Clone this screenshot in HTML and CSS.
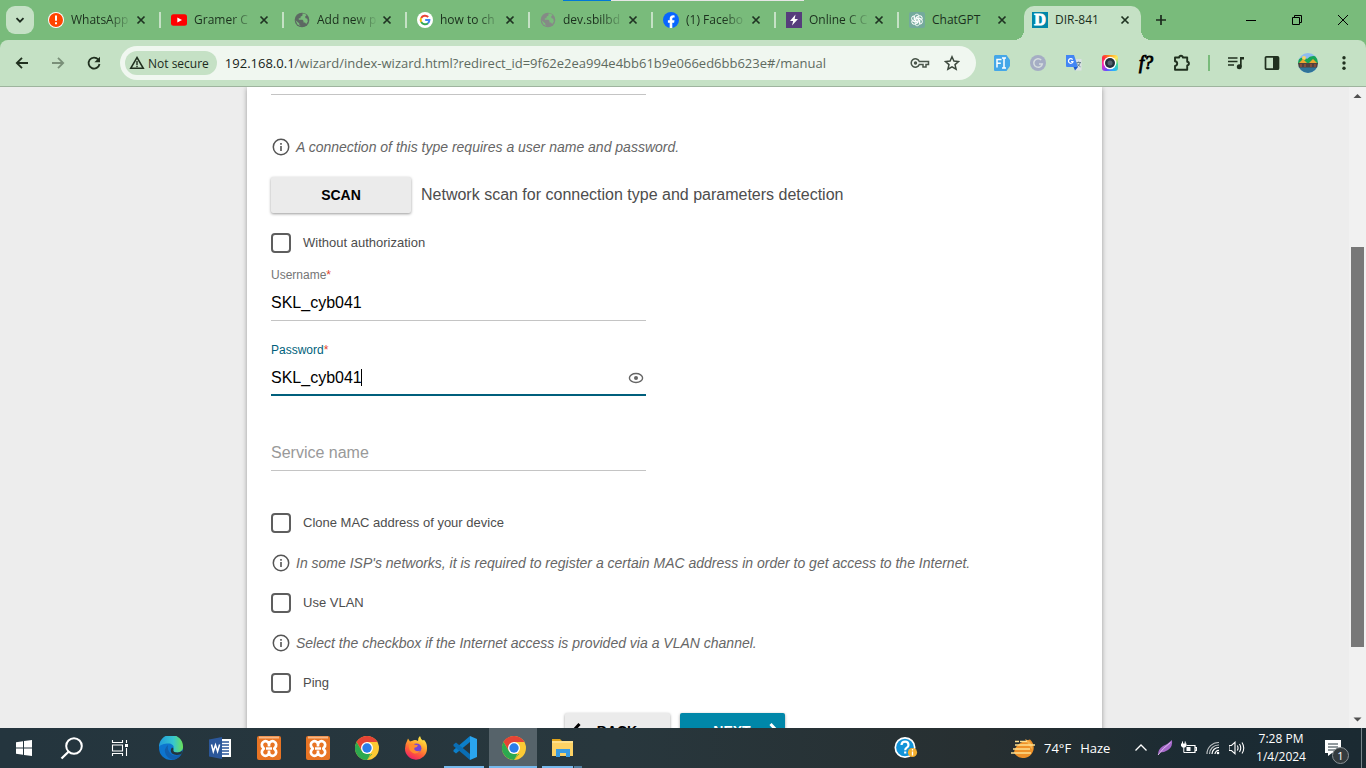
FILE: index.html
```html
<!DOCTYPE html>
<html lang="en">
<head>
<meta charset="utf-8">
<title>DIR-841</title>
<link rel="stylesheet" href="styles.css">
</head>
<body>
<svg class="defs" aria-hidden="true">
  <symbol id="x" viewBox="0 0 16 16"><path d="M4.500 4.500l7 7m0-7l-7 7" stroke="#1f3322" stroke-width="1.700" fill="none"/></symbol>
  <symbol id="globe" viewBox="0 0 16 16"><circle cx="8" cy="8" r="7.300" fill="currentColor"/><path d="M8.500 1.500v2l-2 1.300v1.500H4.800v1.500H8.500l1 1.200v1.500H11l1.200 1.400 1.600-2.400-.5-2.700-1.600-.6-.7-1.500 1.500-1.400-1.500-1.500zM1.500 8.300l3.800 3.200v1.200l1.500 1.600-3.300-1.800z" fill="#79bb7b"/></symbol>
  <symbol id="info" viewBox="0 0 20 20"><circle cx="10" cy="10" r="7.700" fill="none" stroke="#555" stroke-width="1.500"/><path d="M10 9v5M10 6v1.700" stroke="#555" stroke-width="1.600"/></symbol>
  <symbol id="chrome" viewBox="0 0 24 24"><circle cx="12" cy="12" r="12" fill="#fcc934"/><path d="M12 12L6.800 15 1.600 6A12 12 0 0 1 22.400 6H12z" fill="#e54335"/><path d="M1.600 6L6.800 15 12 18h5.200L12 24A12 12 0 0 1 1.600 6z" fill="#2da94f"/><path d="M12 24l5.200-9 .2-5H22.400L12 24z" fill="#fcc934"/><circle cx="12" cy="12" r="6" fill="#fff"/><circle cx="12" cy="12" r="4.700" fill="#2b7de9"/></symbol>
  <symbol id="xampp" viewBox="0 0 24 24"><rect width="24" height="24" rx="2" fill="#e87424"/><path d="M2 1.500h20" stroke="#f6b785" stroke-width="2"/><path d="M12 10.500V8.500A3.600 3.600 0 1 0 6 11.500Q7.500 12.500 6 13.500A3.600 3.600 0 1 0 12 16.500V14.500M12 8.500A3.600 3.600 0 1 1 18 11.500Q16.500 12.500 18 13.500A3.600 3.600 0 1 1 12 16.500M9 12.500h6" fill="none" stroke="#fff" stroke-width="2.700" stroke-linejoin="round"/></symbol>
</svg>

<header class="tabstrip">
  <button class="tab-search" aria-label="Search tabs"><svg width="16" height="16" viewBox="0 0 16 16"><path d="M4.500 6.200L8 9.700l3.500-3.500" fill="none" stroke="#1c2b1e" stroke-width="1.800"/></svg></button>
  <nav class="tabs">
    <div class="tab"><svg class="fav" viewBox="0 0 16 16"><circle cx="8" cy="8" r="8" fill="#fff"/><circle cx="8" cy="8" r="7" fill="#ff4500"/><path d="M8 3.500v5.300M8 10.300v2" stroke="#fff" stroke-width="2"/></svg><a class="fade" href="#">WhatsApp</a><button aria-label="Close tab"><svg><use href="#x"/></svg></button></div>
    <div class="tab"><svg class="fav" viewBox="0 0 16 16"><rect y="2.300" width="16" height="11.400" rx="2.500" fill="#f00"/><path d="M6.300 5.500v5L11 8z" fill="#fff"/></svg><a class="fade" href="#">Gramer C</a><button aria-label="Close tab"><svg><use href="#x"/></svg></button></div>
    <div class="tab"><svg class="fav dark"><use href="#globe"/></svg><a class="fade" href="#">Add new p</a><button aria-label="Close tab"><svg><use href="#x"/></svg></button></div>
    <div class="tab"><svg class="fav" viewBox="0 0 16 16"><circle cx="8" cy="8" r="8" fill="#fff"/><g fill="none" stroke-width="2"><path d="M4.200 5.900A4.400 4.400 0 0 1 11.200 5" stroke="#ea4335"/><path d="M4.200 5.900a4.400 4.400 0 0 0 0 4.200" stroke="#fbbc05"/><path d="M4.200 10.100A4.400 4.400 0 0 0 11 11.200" stroke="#34a853"/><path d="M11 11.200A4.400 4.400 0 0 0 12.400 8H8.200" stroke="#4285f4"/></g></svg><a class="fade" href="#">how to ch</a><button aria-label="Close tab"><svg><use href="#x"/></svg></button></div>
    <div class="tab"><svg class="fav grey"><use href="#globe"/></svg><a class="fade" href="#">dev.sbilbd</a><button aria-label="Close tab"><svg><use href="#x"/></svg></button></div>
    <div class="tab"><svg class="fav" viewBox="0 0 16 16"><circle cx="8" cy="8" r="8" fill="#0866ff"/><path d="M6.700 16v-5.200H4.900V8.200h1.800V7c0-2.600 1.200-3.800 3.700-3.800l1.200.2v2.200h-.9c-1.100 0-1.400.5-1.400 1.500v1.100h2.200l-.4 2.600H9.300V16z" fill="#fff"/></svg><a class="fade" href="#">(1) Facebo</a><button aria-label="Close tab"><svg><use href="#x"/></svg></button></div>
    <div class="tab"><svg class="fav" viewBox="0 0 16 16"><rect width="16" height="16" fill="#563d7c"/><path d="M9.500 2.500L4 9h3.200L6 13.500 12 7H8.700z" fill="#fff"/></svg><a class="fade" href="#">Online C C</a><button aria-label="Close tab"><svg><use href="#x"/></svg></button></div>
    <div class="tab"><svg class="fav" viewBox="0 0 16 16"><rect width="16" height="16" rx="2" fill="#74aa9c"/><g fill="none" stroke="#fff" stroke-width=".9"><path id="pet" d="M8 6L5.500 7.400V4.500C5.500 2 9 1.500 10 3.500L7 5.200V8"/><use href="#pet" transform="rotate(60 8 8)"/><use href="#pet" transform="rotate(120 8 8)"/><use href="#pet" transform="rotate(180 8 8)"/><use href="#pet" transform="rotate(240 8 8)"/><use href="#pet" transform="rotate(300 8 8)"/></g></svg><a href="#">ChatGPT</a><button aria-label="Close tab"><svg><use href="#x"/></svg></button></div>
    <div class="tab active"><span class="fav dlink">D</span><a href="#">DIR-841</a><button aria-label="Close tab"><svg><use href="#x"/></svg></button></div>
  </nav>
  <button class="new-tab" aria-label="New tab"><svg width="16" height="16" viewBox="0 0 16 16"><path d="M8 3v10M3 8h10" stroke="#1c2b1e" stroke-width="1.700"/></svg></button>
  <div class="window-buttons">
    <button aria-label="Minimize"><svg viewBox="0 0 12 12"><path d="M1 6.500h10" /></svg></button>
    <button aria-label="Restore"><svg viewBox="0 0 12 12"><path d="M1.500 3.500h7v7h-7zM3.500 3.500v-2h7v7h-2"/></svg></button>
    <button aria-label="Close"><svg viewBox="0 0 12 12"><path d="M1 1l10 10M11 1L1 11"/></svg></button>
  </div>
  <div class="load-strip"></div>
</header>

<div class="toolbar">
  <button aria-label="Back"><svg viewBox="0 0 16 16"><path d="M14 8H3M8 2.800L2.800 8 8 13.200" class="line"/></svg></button>
  <button aria-label="Forward" class="dim"><svg viewBox="0 0 16 16"><path d="M2 8h11M8 2.800L13.200 8 8 13.200" class="line"/></svg></button>
  <button aria-label="Reload"><svg viewBox="0 0 16 16"><path d="M12.300 4.500A5.500 5.500 0 1 0 13.500 9" class="line"/><path d="M14 1.700v5.600H8.400z" fill="#20301f"/></svg></button>
  <div class="omnibox">
    <button class="chip"><svg viewBox="0 0 16 16"><path d="M8 2.500L14.300 13.300H1.700z" fill="none" stroke="#20301f" stroke-width="1.500"/><path d="M8 6v4M8 10.800v1.400" stroke="#20301f" stroke-width="1.400"/></svg>Not secure</button>
    <a class="url" href="#/manual"><span>192.168.0.1</span>/wizard/index-wizard.html?redirect_id=9f62e2ea994e4bb61b9e066ed6bb623e#/manual</a>
    <button aria-label="Passwords"><svg viewBox="0 0 20 16" class="key"><path d="M9.300 6.500A4.200 4.200 0 1 0 9.300 9.500H13v2.500h3V9.500h2.500v-3z" fill="none" stroke="#4a564b" stroke-width="1.500"/><circle cx="5.500" cy="8" r="1.700" fill="#4a564b"/></svg></button>
    <button aria-label="Bookmark this tab"><svg viewBox="0 0 16 16"><path d="M8 1.800l1.900 4.300 4.600.4-3.500 3.100 1.100 4.600L8 11.800l-4.100 2.400L5 9.600 1.500 6.500l4.600-.4z" fill="none" stroke="#3c483d" stroke-width="1.500"/></svg></button>
  </div>
  <button aria-label="Font extension"><svg viewBox="0 0 16 16"><path d="M1 0h11.500L16 5v6l-3.500 5H1a1 1 0 0 1-1-1V1z" fill="#45a7e8"/><path d="M3 12.500v-8h4.500M3 8.300h3.800M8 3h4M10 3v10M8 13h4" fill="none" stroke="#fff" stroke-width="1.500"/></svg></button>
  <button aria-label="Grammarly"><svg viewBox="0 0 16 16"><circle cx="8" cy="8" r="8" fill="#a5adc4"/><path d="M11.200 5A4.300 4.300 0 1 0 12.300 9H9" fill="none" stroke="#d5ddde" stroke-width="1.500"/></svg></button>
  <button aria-label="Translate"><svg viewBox="0 0 16 16"><path d="M7 4h8.500v11.500H9z" fill="#dce2e5"/><path d="M0 0h8l4 12H1a1 1 0 0 1-1-1z" fill="#4285f4"/><path d="M7.500 12H12l-3 3.500z" fill="#1b57c8"/><path d="M6.600 4.600A2.300 2.300 0 1 0 7 6.500H5" fill="none" stroke="#fff" stroke-width="1.200"/><path d="M10.500 7.500H15M12.700 6.500v1M14.300 7.500q-.6 2.500-3 4M11.300 8.500q1 2 3.200 3.300" fill="none" stroke="#607d8b" stroke-width=".9"/></svg></button>
  <button aria-label="Screen capture"><span class="capture"><svg viewBox="0 0 16 16"><circle cx="8" cy="8" r="6.300" fill="#fff"/><circle cx="8" cy="8" r="5" fill="#26303b"/><circle cx="8" cy="8" r="2.500" fill="#56636e"/></svg></span></button>
  <button aria-label="What font" class="whatfont">f?</button>
  <button aria-label="Extensions"><svg class="big" viewBox="0 0 18 18"><path d="M2 3.500h4.200q.1-1.700 1.800-1.700t1.800 1.700h4.400v4.300q1.700.1 1.700 1.800t-1.700 1.800v4.300H2v-3.800q2.200-.3 2.200-2.300T2 7.300z" fill="none" stroke="#20301f" stroke-width="1.900" stroke-linejoin="round"/></svg></button>
  <i class="divider"></i>
  <button aria-label="Media"><svg viewBox="0 0 16 16"><path d="M0 3h9.500M0 6.500h9.500M0 10h6" stroke="#20301f" stroke-width="1.700"/><path d="M12 11.500V2h4v2.500h-2.300v7.200" fill="#20301f"/><circle cx="11.300" cy="11.700" r="2.500" fill="#20301f"/></svg></button>
  <button aria-label="Side panel"><svg viewBox="0 0 16 16"><rect x="1.500" y="1.800" width="13" height="12.400" rx="1" fill="none" stroke="#20301f" stroke-width="1.700"/><path d="M9 2h5.500v12H9z" fill="#20301f"/></svg></button>
  <button aria-label="Profile"><svg class="avatar" viewBox="0 0 20 20"><clipPath id="av"><circle cx="10" cy="10" r="10"/></clipPath><g clip-path="url(#av)"><path fill="#8fbcf0" d="M0 0h20v20H0z"/><path d="M0 7q5-5 9-1 4-5 11-2v7H0z" fill="#16a556"/><circle cx="6" cy="5" r="2" fill="#f8d46c"/><path d="M0 10h20v5H0z" fill="#51423d"/><path d="M1 10l4-4 4 4zM11 10l4-4 4 4z" fill="#eda52f"/><path d="M3 11v3M7 11v3M13 11v3M17 11v3" stroke="#b6563c"/><path d="M0 14.500h20V20H0z" fill="#2f7398"/></g></svg></button>
  <button aria-label="Menu"><svg viewBox="0 0 16 16" fill="#20301f"><circle cx="8" cy="2.700" r="1.700"/><circle cx="8" cy="8" r="1.700"/><circle cx="8" cy="13.300" r="1.700"/></svg></button>
</div>

<div class="viewport">
  <main class="page">
    <form class="card">
      <div class="field-end"></div>
      <p class="hint"><svg><use href="#info"/></svg>A connection of this type requires a user name and password.</p>
      <div class="scan-row"><button type="button" class="btn scan">SCAN</button><span>Network scan for connection type and parameters detection</span></div>
      <label class="check"><input type="checkbox"><span>Without authorization</span></label>
      <div class="field"><label for="user">Username<b>*</b></label><input id="user" value="SKL_cyb041"></div>
      <div class="field focused"><label for="pass">Password<b>*</b></label><input id="pass" value="SKL_cyb041"><i class="caret"></i><button type="button" class="eye" aria-label="Show password"><svg viewBox="0 0 16 12"><ellipse cx="8" cy="6" rx="6.600" ry="4.500" fill="none" stroke="#666" stroke-width="1.400"/><circle cx="8" cy="6" r="2" fill="#666"/></svg></button></div>
      <div class="field last"><label for="service"></label><input id="service" placeholder="Service name" aria-label="Service name"></div>
      <label class="check"><input type="checkbox"><span>Clone MAC address of your device</span></label>
      <p class="hint"><svg><use href="#info"/></svg>In some ISP's networks, it is required to register a certain MAC address in order to get access to the Internet.</p>
      <label class="check"><input type="checkbox"><span>Use VLAN</span></label>
      <p class="hint"><svg><use href="#info"/></svg>Select the checkbox if the Internet access is provided via a VLAN channel.</p>
      <label class="check"><input type="checkbox"><span>Ping</span></label>
      <div class="steps">
        <button type="button" class="btn"><svg viewBox="0 0 10 16"><path d="M8.500 1L2 8l6.500 7"/></svg>BACK<i></i></button>
        <button type="button" class="btn next"><i></i>NEXT<svg viewBox="0 0 10 16"><path d="M1.500 1L8 8l-6.500 7"/></svg></button>
      </div>
    </form>
  </main>
  <div class="scrollbar"><svg viewBox="0 0 17 17"><path d="M4.500 11L8.500 7l4 4z"/></svg><div class="track"><div class="thumb"></div></div><svg viewBox="0 0 17 17"><path d="M4.500 6.500l4 4 4-4z"/></svg></div>
</div>

<footer class="taskbar">
  <button class="sys" aria-label="Start"><svg width="16" height="16" viewBox="0 0 16 16"><path d="M0 2.300L7 1.300v6.300H0zM8 1.100L16 0v7.600H8zM0 8.600h7v6.200l-7-1zM8 8.600h8V16l-8-1.100z" fill="#fff"/></svg></button>
  <button class="sys" aria-label="Search"><svg width="24" height="24" viewBox="0 0 24 24"><circle cx="14" cy="10" r="7.800" fill="none" stroke="#fff" stroke-width="2"/><path d="M8.500 15.700L1.500 22.500" stroke="#fff" stroke-width="2.300"/></svg></button>
  <button class="sys" aria-label="Task view"><svg width="18" height="16" viewBox="0 0 18 16"><path d="M1.500 0v2.500h10V0M1.500 5h10v6h-10zM1.500 16v-2.500h10V16M15.500 0v3M15.500 8v8" fill="none" stroke="#fff" stroke-width="1.100"/><path d="M14 4h3v3h-3z" fill="#fff"/></svg></button>
  <div class="apps">
    <button aria-label="Edge"><svg viewBox="0 0 24 24"><defs><linearGradient id="e1"><stop stop-color="#209bdc"/><stop offset=".6" stop-color="#37c6ce"/><stop offset="1" stop-color="#6be156"/></linearGradient></defs><circle cx="12" cy="12" r="12" fill="#0d75cf"/><path d="M0 11A12 12 0 0 1 24 10.500c.3 4-3 6-6.500 6-3.500 0-5-1.500-3.500-3 2-3-.5-6-4.500-6C5 7.500 1 9 0 11z" fill="url(#e1)"/><path d="M9 9q-5 4-2 10 3 4.500 8 4.700A12 12 0 0 0 22.500 18q-6 3-10.500 0-4-3.500-3-9z" fill="#115fae"/><path d="M14.500 13q-1 3.500 4 3.500 3 0 5-2l-1 3.500q-6 2-9.500-.5-2.500-3 0-6 1.500 0 1.500 1.500z" fill="#24353d"/></svg></button>
    <button aria-label="Word"><svg viewBox="0 0 24 24"><path d="M12 3h11v18H12z" fill="#fff"/><path d="M14 6h7M14 9h7M14 12h7M14 15h7M14 18h7" stroke="#2b579a" stroke-width="1.300"/><path d="M1 3.500L14 1v22L1 20.500z" fill="#2b579a"/><path d="M3.500 8.500L5.300 15.500 7.500 9l2.100 6.500 2-7" fill="none" stroke="#fff" stroke-width="1.500"/></svg></button>
    <button aria-label="XAMPP"><svg><use href="#xampp"/></svg></button>
    <button aria-label="XAMPP Control"><svg><use href="#xampp"/></svg></button>
    <button aria-label="Chrome"><svg><use href="#chrome"/></svg></button>
    <button aria-label="Firefox"><svg viewBox="0 0 24 24"><defs><linearGradient id="f1" x1=".8" y1="0" x2=".3" y2="1"><stop stop-color="#fff24d"/><stop offset=".35" stop-color="#ffb02e"/><stop offset=".7" stop-color="#ff5a39"/><stop offset="1" stop-color="#ed1f6b"/></linearGradient></defs><path d="M3 5l1-2.500 2 3 2.500-.7Q11 3 14 5q-.5-3 2-5 .5 3 3 4.500l1-.7q3.500 4 3 9A11 11 0 0 1 1 12.500Q1 8 3 5z" fill="url(#f1)"/><circle cx="12.500" cy="12.300" r="4.900" fill="#7545d5"/><path d="M5 8.500q4-1.500 6 .3l3 .4q-.5 2-3.500 2.500-1 2.300 2 3.300 2 .5 4-.5-3 4.500-7.500 2.500Q4 14.500 5 8.500z" fill="#ff8b2e"/></svg></button>
    <button class="open" aria-label="VS Code"><svg viewBox="0 0 24 24"><path d="M17 0l7 3v18l-7 3z" fill="#2aa5ef"/><path d="M17 0v6L3 17.500.5 15.500V14z" fill="#0c7fc9"/><path d="M17 24v-6L3 6.500.5 8.500V10z" fill="#0a6eb4"/></svg></button>
    <button class="open current" aria-label="Chrome window"><svg><use href="#chrome"/></svg></button>
    <button class="open stacked" aria-label="File Explorer"><svg viewBox="0 0 24 24"><path d="M1 3h8l2 2H1z" fill="#e0a31a"/><path d="M1 5h21v15H1z" fill="#fdd264"/><path d="M1 5h21v2H1z" fill="#ffe08a"/><path d="M5 21v-8h14v8h-4v-4H9v4z" fill="#3a9be0"/></svg></button>
  </div>
  <div class="tray">
    <button class="help" aria-label="Get help"><svg width="24" height="24" viewBox="0 0 24 24"><circle cx="11" cy="11.500" r="9.700" fill="#1293d8" stroke="#fff" stroke-width="1.700"/><path d="M7.500 9q.3-3.300 3.600-3.300T14.500 9q0 1.600-1.700 2.600-1.600.9-1.600 2.600M11.200 15.500v2" fill="none" stroke="#fff" stroke-width="2.200"/><circle cx="18.500" cy="16.500" r="4.600" fill="#f4af2f"/><path d="M18.500 15.500v4M18.500 13v1.500" stroke="#fff" stroke-width="1.300"/></svg></button>
    <button class="weather"><svg width="24" height="24" viewBox="0 0 24 24"><path d="M19 3.500A10.500 10.500 0 1 1 3 16.500q1-10 16-13z" fill="#ee9128"/><path d="M14 3q8 2.500 7.500 11-5-6-7.500-11z" fill="#f5b04b"/><path d="M4 5.500h4M9 5.500h7M4 9h20M2 13h17M0 17h20" stroke="#fee08e" stroke-width="1.700"/></svg><span>74°F</span><span>Haze</span></button>
    <button aria-label="Hidden icons"><svg viewBox="0 0 16 16"><path d="M2.500 10.500L8 5l5.500 5.500" fill="none" stroke="#fff" stroke-width="1.300"/></svg></button>
    <button aria-label="Pen"><svg viewBox="0 0 16 16"><path d="M1 15Q1 9 6 6q5-2 9-6 1 7-4 10-4 2.500-8 2.500z" fill="#a76acb"/><path d="M1 15Q6 8 13.500 2.500" stroke="#e0bfee" fill="none"/></svg></button>
    <button aria-label="Battery"><svg viewBox="0 0 16 16"><path d="M5.500 5.500H14v7H4.500M14.500 7.500h1v3h-1" fill="none" stroke="#fff" stroke-width="1.200"/><path d="M5.500 7h4v4h-4zM0 3.500h5.500V6L4 7.500H1.500L0 6zM1 1.500h1v2H1zM3.700 1.500h1v2h-1z" fill="#fff"/><path d="M2.800 7v5.500h2" fill="none" stroke="#fff"/></svg></button>
    <button aria-label="Network"><svg viewBox="0 0 16 16"><g fill="none" stroke="#fff" stroke-width="1.200"><path d="M10 14a3.500 3.500 0 0 1 4-3.500M7 14a6.500 6.500 0 0 1 7-6.500"/><path d="M4.500 14A9 9 0 0 1 14 5M2 14A11.500 11.500 0 0 1 14 2.500" opacity=".7"/></g><circle cx="13" cy="13" r="1.300" fill="#fff"/></svg></button>
    <button aria-label="Volume"><svg viewBox="0 0 16 16"><path d="M0 5.500h2.500L6 2.200v11.600L2.500 10.500H0zM8.300 5.500q1.500 2.500 0 5M10.500 4q2.500 4 0 8M13 2.500q3.500 5.500 0 11" fill="none" stroke="#fff" stroke-width="1.100"/></svg></button>
    <button class="clock"><span>7:28 PM</span><span>1/4/2024</span></button>
    <button class="notes" aria-label="1 notification"><svg width="18" height="16" viewBox="0 0 18 16"><path d="M1 0h16v13H8l-4 3v-3H1z" fill="#fff"/><path d="M4 4h10M4 7h10M4 10h7" stroke="#25353c"/></svg><b>1</b></button>
    <i class="desktop-edge"></i>
  </div>
</footer>
</body>
</html>
```
FILE: styles.css
```css
* { box-sizing: border-box; }
body {
  margin: 0;
  height: 100vh;
  display: flex;
  flex-direction: column;
  overflow: hidden;
  background: #79bb7b;
  font-family: "Open Sans", "Noto Sans", sans-serif;
  font-size: 12px;
}
button { border: 0; padding: 0; background: none; color: inherit; font: inherit; }
a { color: inherit; text-decoration: none; }
.defs { position: absolute; width: 0; height: 0; }

/* Tab strip */
.tabstrip { position: relative; flex: none; height: 40px; display: flex; align-items: center; padding-left: 6px; }
.tab-search { width: 28px; height: 28px; border-radius: 9px; background: #c5e1c5; display: grid; place-items: center; margin-right: 4px; flex: none; }
.tabs { display: flex; align-self: stretch; min-width: 0; }
.tab { position: relative; flex: 0 1 123px; width: 123px; min-width: 0; display: flex; align-items: center; padding: 0 12px 0 10px; color: #1b2f1d; }
.fav { width: 16px; height: 16px; flex: none; }
.fav.dark { color: #5c6862; }
.fav.grey { color: #858a86; }
.dlink { background: #0087a9; color: #fff; font: bold 16px/16px "Liberation Serif", serif; text-align: center; -webkit-text-stroke: 1px #fff; }
.tab a { flex: 1; min-width: 0; margin-left: 7px; overflow: hidden; white-space: nowrap; line-height: 18px; }
.tab .fade { -webkit-mask-image: linear-gradient(90deg, #000 60%, rgba(0, 0, 0, .1) 95%); mask-image: linear-gradient(90deg, #000 60%, rgba(0, 0, 0, .1) 95%); }
.tab button, .tab button svg { width: 16px; height: 16px; display: block; flex: none; }
.tab:not(.active)::after { content: ""; position: absolute; right: 0; top: 12px; width: 2px; height: 16px; background: #c5e1c5; }
.tab:nth-child(8)::after { display: none; }
.tab.active { isolation: isolate; }
.tab.active::before { content: ""; position: absolute; z-index: -1; inset: 6px 4px 0 2px; border-radius: 10px 10px 0 0; background: #c5e1c5; }
.tab.active::after {
  content: ""; position: absolute; z-index: -1; left: -8px; right: -6px; bottom: 0; height: 10px;
  background: radial-gradient(circle at 0 0, transparent 10px, #c5e1c5 10px) left / 10px 10px no-repeat, radial-gradient(circle at 100% 0, transparent 10px, #c5e1c5 10px) right / 10px 10px no-repeat;
}
.new-tab { display: grid; place-items: center; width: 32px; flex: none; }
.window-buttons { display: flex; margin-left: auto; align-self: stretch; }
.window-buttons button { width: 46px; display: grid; place-items: center; }
.window-buttons svg { width: 12px; height: 12px; fill: none; stroke: #000; }
.load-strip { position: absolute; top: 0; left: 563px; width: 241px; height: 1px; background: linear-gradient(90deg, #0078d7 20%, #e6e6e6 20%); }

/* Toolbar */
.toolbar { flex: none; height: 47px; display: flex; align-items: center; padding: 0 4px; background: #c5e1c5; border-bottom: 1px solid #9eb49e; border-radius: 8px 8px 0 0; }
.toolbar > button { width: 36px; height: 36px; flex: none; display: grid; place-items: center; }
.toolbar svg { width: 16px; height: 16px; display: block; }
.toolbar svg.big { width: 18px; height: 18px; }
.toolbar svg.avatar { width: 20px; height: 20px; }
.line { fill: none; stroke: #20301f; stroke-width: 1.8; }
.dim { opacity: .45; }
.omnibox { flex: 1; min-width: 0; height: 34px; margin: 0 8px; padding: 0 8px 0 5px; display: flex; align-items: center; border-radius: 17px; background: #f0f7f0; }
.omnibox > button { width: 32px; flex: none; display: grid; place-items: center; }
.omnibox > .chip { width: auto; height: 24px; display: flex; align-items: center; gap: 3px; padding: 0 8px 0 4px; border-radius: 12px; background: #c5e1c5; color: #1b2b1d; font-weight: 500; }
.omnibox svg.key { width: 20px; }
.url { flex: 1; min-width: 0; overflow: hidden; white-space: nowrap; margin-left: 8px; color: #5e6a60; font-size: 13px; line-height: 20px; }
.url span { color: #17231a; }
.capture { width: 16px; height: 16px; border-radius: 3px; background: conic-gradient(#ff9e1b, #ffe95c, #43d9a0, #26b3ff, #6c4dff, #ff27b8, #ff2a3c, #ff9e1b); }
.toolbar .whatfont { font: italic 18px "Liberation Serif", serif; color: #000; -webkit-text-stroke: 1px #000; }
.divider { width: 2px; height: 16px; margin: 0 8px; background: #79bb7b; flex: none; }

/* Page */
.viewport { flex: 1; min-height: 0; display: flex; overflow: hidden; background: #ededed; font-family: "Liberation Sans", Arial, sans-serif; color: #4d4d4d; }
.page { flex: 1; min-width: 0; display: flex; justify-content: center; align-items: flex-start; }
.card { width: 100%; max-width: 855px; padding: 0 24px 24px; background: #fff; box-shadow: 0 1px 5px rgba(0, 0, 0, .35); }
.field-end { width: 375px; max-width: 100%; height: 8px; border-bottom: 1px solid #c4c4c4; margin-bottom: 32px; }
.hint { height: 40px; margin: 0; display: flex; align-items: center; gap: 5px; font-size: 14px; font-style: italic; color: #666; white-space: nowrap; }
.hint svg { width: 20px; height: 20px; flex: none; }
.scan-row { height: 56px; display: flex; align-items: center; gap: 10px; font-size: 16px; }
.btn { height: 36px; border-radius: 2px; background: #ebebeb; color: #000; font: bold 14px "Liberation Sans", Arial, sans-serif; box-shadow: 0 1px 3px rgba(0, 0, 0, .4); }
.scan { width: 140px; flex: none; }
.check { height: 40px; display: flex; align-items: center; gap: 12px; font-size: 13px; }
.check span { padding-bottom: 2px; }
.check input { appearance: none; width: 20px; height: 20px; margin: 0; border: 2px solid #5e5e5e; border-radius: 4px; background: #fff; }
.field { position: relative; width: 375px; max-width: 100%; height: 75px; padding-top: 4px; }
.field label { display: block; height: 16px; font-size: 12px; line-height: 16px; color: #757575; }
.field label b { color: #e0452c; font-weight: normal; }
.field input { display: block; width: 100%; height: 38px; padding: 2px 24px 0 0; border: 0; border-bottom: 1px solid #c4c4c4; outline: 0; background: none; font: 16px "Liberation Sans", Arial, sans-serif; color: #000; }
.field input::placeholder { color: #999; opacity: 1; }
.field.focused label { color: #005f7c; }
.field.focused input { padding-top: 3px; border-bottom: 2px solid #005f7c; }
.field.last { margin-bottom: 15px; }
.caret { position: absolute; left: 90px; top: 31px; width: 1px; height: 17px; background: #000; }
.eye { position: absolute; right: 2px; top: 34px; }
.eye svg { display: block; width: 16px; height: 12px; }
.steps { display: flex; justify-content: center; gap: 10px; margin-top: 10px; }
.steps .btn { width: 105px; padding: 0 6px; display: flex; align-items: center; justify-content: space-between; }
.steps svg, .steps i { width: 10px; height: 16px; }
.steps path { fill: none; stroke: currentColor; stroke-width: 3; }
.steps .next { background: #0087a9; color: #fff; }
.scrollbar { width: 17px; flex: none; background: #f1f1f1; display: flex; flex-direction: column; align-items: center; }
.scrollbar svg { width: 17px; height: 17px; flex: none; fill: #505050; }
.track { flex: 1; width: 13px; padding-top: 143px; }
.thumb { height: 400px; background: #787878; }

/* Taskbar */
.taskbar { flex: none; height: 40px; display: flex; background: linear-gradient(90deg, #24353e, #28373d 45%, #272f31 72%, #1b2b33 88%, #1b2a32); color: #fff; }
.taskbar button { display: grid; place-items: center; flex: none; }
.taskbar svg { display: block; }
.sys { width: 48px; }
.apps { display: flex; margin-left: 2px; }
.apps button { position: relative; width: 49px; }
.apps svg { width: 24px; height: 24px; }
.apps .open::after { content: ""; position: absolute; left: 4px; right: 5px; bottom: 0; height: 2px; background: #76b9ed; }
.apps .current { background: linear-gradient(#56636a, #56636a) 0 0 / 48px 100% no-repeat; }
.apps .current::after { left: 0; right: 1px; }
.apps .stacked::after { background: linear-gradient(90deg, #76b9ed 31px, #24353e 31px, #24353e 32px, #517e9f 32px); }
.tray { margin-left: auto; display: flex; }
.tray > button { width: 24px; }
.tray > button > svg { width: 16px; height: 16px; }
.tray .help svg, .tray .weather svg { width: 24px; height: 24px; }
.tray .help { margin-right: 93px; }
.tray .weather { width: 118px; display: flex; align-items: center; gap: 9px; font-size: 13px; }
.tray .clock { width: 64px; display: flex; flex-direction: column; justify-content: center; line-height: 18px; }
.tray .notes { position: relative; width: 48px; padding-right: 8px; }
.tray .notes svg { width: 18px; }
.notes b { position: absolute; left: 19px; top: 19px; width: 17px; height: 17px; border: 1px solid #8b9296; border-radius: 50%; background: #343b3e; font-size: 11px; font-weight: 400; line-height: 15px; text-align: center; }
.desktop-edge { width: 5px; border-left: 1px solid #78858b; }
```
